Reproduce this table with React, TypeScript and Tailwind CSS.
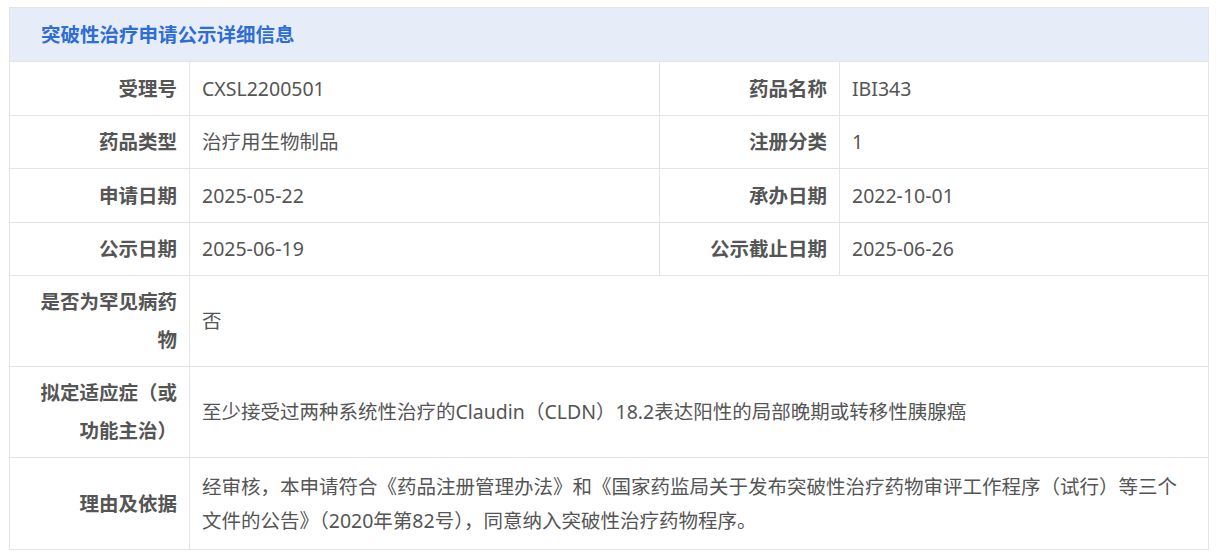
const rows: { label: string; value: string; label2: string; value2: string }[] = [
  { label: "受理号", value: "CXSL2200501", label2: "药品名称", value2: "IBI343" },
  { label: "药品类型", value: "治疗用生物制品", label2: "注册分类", value2: "1" },
  { label: "申请日期", value: "2025-05-22", label2: "承办日期", value2: "2022-10-01" },
  { label: "公示日期", value: "2025-06-19", label2: "公示截止日期", value2: "2025-06-26" },
];

const wide: { label: string; value: string }[] = [
  { label: "是否为罕见病药物", value: "否" },
  {
    label: "拟定适应症（或功能主治）",
    value: "至少接受过两种系统性治疗的Claudin（CLDN）18.2表达阳性的局部晚期或转移性胰腺癌",
  },
  {
    label: "理由及依据",
    value:
      "经审核，本申请符合《药品注册管理办法》和《国家药监局关于发布突破性治疗药物审评工作程序（试行）等三个文件的公告》（2020年第82号），同意纳入突破性治疗药物程序。",
  },
];

const labelCls =
  "flex w-[180px] shrink-0 items-center justify-end border-r border-[#e4e4e4] px-[12px] text-right font-bold text-[#555]";
const valueCls = "flex items-center px-[12px] text-[#555]";

export default function App() {
  return (
    <div
      className="min-h-[559px] bg-white pl-[9px] pt-[7px] text-[19.5px]"
      style={{ fontFamily: '"Noto Sans", "Noto Sans CJK SC", sans-serif' }}
    >
      <div className="w-[1200px] border border-[#e4e4e4]">
        <div className="flex h-[54px] items-center border-b border-[#e4e4e4] bg-[#e6edf8] pl-[31px] font-bold text-[#2f6dd5]">
          突破性治疗申请公示详细信息
        </div>

        {rows.map((r, i) => (
          <div key={i} className={`flex ${i % 2 === 0 ? "h-[54px]" : "h-[53px]"} border-b border-[#e4e4e4]`}>
            <div className={labelCls}>{r.label}</div>
            <div className={`${valueCls} w-[470px] border-r border-[#e4e4e4]`}>{r.value}</div>
            <div className={labelCls}>{r.label2}</div>
            <div className={`${valueCls} flex-1`}>{r.value2}</div>
          </div>
        ))}

        {wide.map((r, i) => (
          <div
            key={i}
            className={`flex h-[91px] ${i < wide.length - 1 ? "border-b border-[#e4e4e4]" : ""}`}
          >
            <div className={`${labelCls} pl-[16px] leading-[38px]`}>
              <span>{r.label}</span>
            </div>
            <div className={`${valueCls} flex-1 leading-[34px]`}>
              <span>{r.value}</span>
            </div>
          </div>
        ))}
      </div>
    </div>
  );
}
